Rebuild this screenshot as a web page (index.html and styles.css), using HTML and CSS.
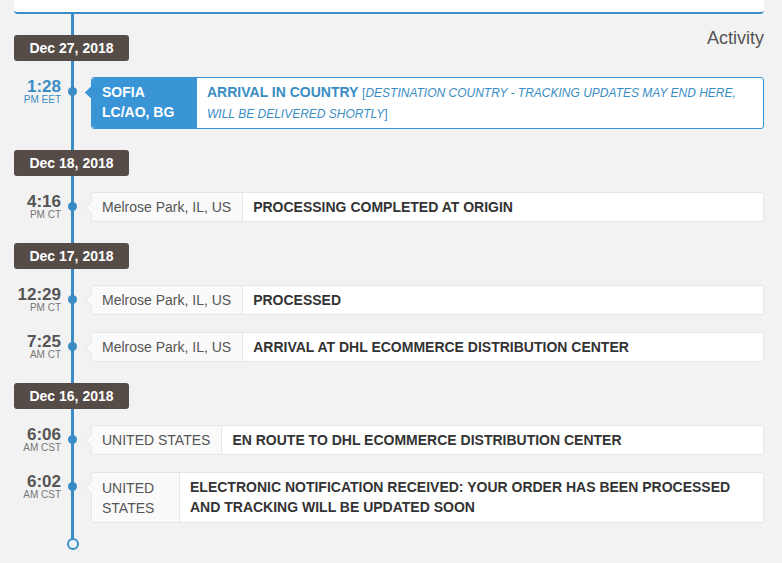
FILE: index.html
```html
<!DOCTYPE html>
<html lang="en">
<head>
    <meta charset="UTF-8">
    <meta name="viewport" content="width=device-width, initial-scale=1.0">
    <title>Tracking activity</title>
    <link rel="stylesheet" href="styles.css">
</head>
<body>
    <div class="top-card"></div>

    <div class="timeline">
        <div class="day">
            <div class="day-head">
                <div class="badge">Dec 27, 2018</div>
                <div class="activity">Activity</div>
            </div>
            <div class="event current">
                <div class="time"><span class="clock">1:28</span><span class="zone">PM EET</span></div>
                <div class="dot"></div>
                <div class="card">
                    <div class="loc loc-sofia">SOFIA LC/AO, BG</div>
                    <div class="desc">ARRIVAL IN COUNTRY <span class="note">[<i>DESTINATION COUNTRY - TRACKING UPDATES MAY END HERE, WILL BE DELIVERED SHORTLY</i>]</span></div>
                </div>
            </div>
        </div>

        <div class="day">
            <div class="day-head">
                <div class="badge">Dec 18, 2018</div>
            </div>
            <div class="event">
                <div class="time"><span class="clock">4:16</span><span class="zone">PM CT</span></div>
                <div class="dot"></div>
                <div class="card">
                    <div class="loc">Melrose Park, IL, US</div>
                    <div class="desc">PROCESSING COMPLETED AT ORIGIN</div>
                </div>
            </div>
        </div>

        <div class="day">
            <div class="day-head">
                <div class="badge">Dec 17, 2018</div>
            </div>
            <div class="event">
                <div class="time"><span class="clock">12:29</span><span class="zone">PM CT</span></div>
                <div class="dot"></div>
                <div class="card">
                    <div class="loc">Melrose Park, IL, US</div>
                    <div class="desc">PROCESSED</div>
                </div>
            </div>
            <div class="event">
                <div class="time"><span class="clock">7:25</span><span class="zone">AM CT</span></div>
                <div class="dot"></div>
                <div class="card">
                    <div class="loc">Melrose Park, IL, US</div>
                    <div class="desc">ARRIVAL AT DHL ECOMMERCE DISTRIBUTION CENTER</div>
                </div>
            </div>
        </div>

        <div class="day">
            <div class="day-head">
                <div class="badge">Dec 16, 2018</div>
            </div>
            <div class="event">
                <div class="time"><span class="clock">6:06</span><span class="zone">AM CST</span></div>
                <div class="dot"></div>
                <div class="card">
                    <div class="loc">UNITED STATES</div>
                    <div class="desc">EN ROUTE TO DHL ECOMMERCE DISTRIBUTION CENTER</div>
                </div>
            </div>
            <div class="event">
                <div class="time"><span class="clock">6:02</span><span class="zone">AM CST</span></div>
                <div class="dot"></div>
                <div class="card">
                    <div class="loc loc-wrap">UNITED STATES</div>
                    <div class="desc">ELECTRONIC NOTIFICATION RECEIVED: YOUR ORDER HAS BEEN PROCESSED AND TRACKING WILL BE UPDATED SOON</div>
                </div>
            </div>
        </div>

        <div class="end"></div>
    </div>
</body>
</html>
```

FILE: styles.css
```css
body {
    margin: 0;
    background-color: #f2f2f2;
    font-family: "Liberation Sans", Arial, sans-serif;
    color: #555;
}

.top-card {
    height: 12px;
    margin: 0 18px 0 14px;
    background-color: #fff;
    border-bottom: 2px solid #3a8dc4;
    border-radius: 0 0 4px 4px;
}

.timeline {
    position: relative;
    padding: 12px 18px 14px 14px;
}

.timeline::before {
    content: "";
    position: absolute;
    left: 71px;
    top: 0;
    bottom: 20px;
    width: 3px;
    background-color: #3a8dc4;
}

.day + .day {
    margin-top: 21px;
}

.day-head {
    display: flex;
    justify-content: space-between;
    align-items: flex-start;
    margin-bottom: 16px;
}

.badge {
    position: relative;
    z-index: 1;
    width: 115px;
    height: 26px;
    line-height: 26px;
    text-align: center;
    background-color: #554b47;
    color: #fff;
    font-weight: bold;
    font-size: 14px;
    border-radius: 3px;
}

.day:first-child .badge {
    margin-top: 9px;
}

.activity {
    margin-top: 2px;
    font-size: 18px;
    line-height: 20px;
    color: #555;
}

.event {
    display: flex;
    align-items: flex-start;
    margin-bottom: 17px;
}

.event:last-child {
    margin-bottom: 0;
}

.time {
    width: 47px;
    text-align: right;
    display: flex;
    flex-direction: column;
    align-items: flex-end;
    padding-top: 3px;
}

.clock {
    font-size: 17px;
    line-height: 14px;
    font-weight: bold;
    color: #555;
}

.zone {
    font-size: 10px;
    line-height: 10px;
    color: #777;
    margin-top: 1px;
}

.dot {
    position: relative;
    z-index: 1;
    width: 9px;
    height: 9px;
    margin: 10px 0 0 7px;
    border-radius: 50%;
    background-color: #3a8dc4;
}

.card {
    position: relative;
    flex: 1;
    display: flex;
    background-color: #fff;
    border: 1px solid #e6e6e6;
    border-radius: 3px;
    margin-left: 14px;
    font-size: 14px;
    line-height: 20px;
}

.card::before {
    content: "";
    position: absolute;
    left: -5px;
    top: 10px;
    width: 8px;
    height: 8px;
    background-color: #fafafa;
    border-left: 1px solid #e6e6e6;
    border-bottom: 1px solid #e6e6e6;
    transform: rotate(45deg);
}

.loc {
    position: relative;
    flex-shrink: 0;
    box-sizing: border-box;
    padding: 4px 11px 4px 10px;
    background-color: #fafafa;
    border-right: 1px solid #e6e6e6;
    border-radius: 3px 0 0 3px;
    white-space: nowrap;
}

.loc-sofia {
    width: 105px;
    padding-top: 4px;
    padding-bottom: 5px;
    white-space: normal;
}

.loc-wrap {
    width: 88px;
    padding-top: 5px;
    white-space: normal;
}

.desc {
    padding: 4px 10px;
    font-weight: bold;
    color: #333;
}

/* latest event */
.current .clock,
.current .zone {
    color: #3a8dc4;
}

.current .card {
    border-color: #3a95d6;
}

.current .card::before {
    background-color: #3a95d6;
    border-color: #3a95d6;
}

.current .loc {
    background-color: #3a95d6;
    border-right-color: #3a95d6;
    color: #fff;
    font-weight: bold;
}

.current .desc {
    color: #3a8dc4;
}

.note {
    font-weight: normal;
    font-size: 12px;
}

.end {
    position: relative;
    z-index: 1;
    width: 8px;
    height: 8px;
    margin: 15px 0 0 53px;
    border: 2px solid #3a8dc4;
    border-radius: 50%;
    background-color: #eef4fa;
}
```
